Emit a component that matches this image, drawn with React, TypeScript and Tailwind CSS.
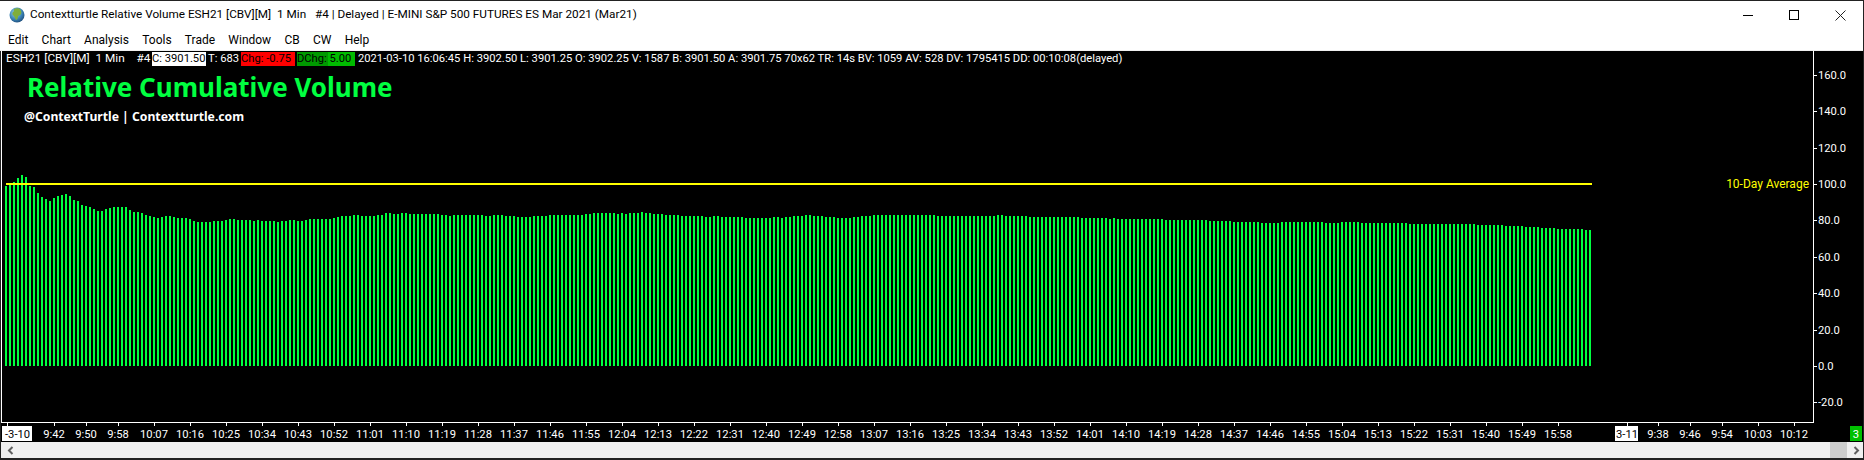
import React from "react";

const FONT = "font-['Roboto','Noto_Sans',sans-serif]";

// bar tops, read at 3x off the chart. head = offset from y 160, the rest = offset from y 205
const head = [78,68,65,54,45,51,78,81,99,111,117,123,114,108,105,102,108,120,123,135,138,141,147,153,153,147,144,141,141,141,141,150,156,156,159,165,168,171,174,171,168,168,171,174,174,174,177,183,186,186,186,186,183,183,183,180,177,177,180];
const middle = [45,45,45,48,45,48,48,48,48,51,48,48,45,45,48,48,45,42,42,42,42,42,42,39,36,33,33,33,30,30,33,33,33,33,30,30,24,24,27,27,24,24,27,27,27,27,27,27,27,27,30,30,33,30,30,30,30,30,30,30,30,33,33,30,30,30,33,33,33,36,36,36,36,33,33,33,33,30,30,30,30,30,30,30,30,30,27,27,24,24,24,24,24,24,27,24,27,24,24,24,21,24,24,27,27,27,30,30,30,30,33,33,
  33,33,33,33,36,36,33,33,36,36,36,36,36,36,39,39,39,39,39,39,39,36,36,39,36,36,33,33,33,30,30,33,33,33,36,36,36,39,39,39,39,36,36,33,33,33,30,30,30,30,30,30,30,30,30,30,30,30,30,30,30,30,33,33,33,33,33,33,33,33,33,33,33,33,33,33,33,30,30,33,33,33,33,33,33,36,36,36,36,36,36,36,36,36,36,36,36,36,39,39,39,39,39,39,39,42,39,42,42,42,42,42,42];
const tail: [number, number][] = [[42,6],[45,11],[48,6],[51,7],[54,5],[51,11],[54,4],[51,5],[54,12],[57,17],[60,7],[63,5],[66,4],[69,4],[72,7],[75,2]];

const tops = [
  ...head.map((z) => 160 + z / 3),
  ...middle.map((z) => 205 + z / 3),
  ...tail.flatMap(([z, n]) => Array<number>(n).fill(205 + z / 3)),
].slice(0, 397);

const yLabels = [160, 140, 120, 100, 80, 60, 40, 20, 0, -20];

// 10:07 to 15:58 every 9 minutes, 36px apart
const dayOne = Array.from({ length: 40 }, (_, i) => {
  const mins = 607 + i * 9;
  return { x: 154 + i * 36, label: `${Math.floor(mins / 60)}:${String(mins % 60).padStart(2, "0")}` };
});

const xLabels = [
  { x: 54, label: "9:42" },
  { x: 86, label: "9:50" },
  { x: 118, label: "9:58" },
  ...dayOne,
  { x: 1658, label: "9:38" },
  { x: 1690, label: "9:46" },
  { x: 1722, label: "9:54" },
  { x: 1758, label: "10:03" },
  { x: 1794, label: "10:12" },
];

const menuItems = ["Edit", "Chart", "Analysis", "Tools", "Trade", "Window", "CB", "CW", "Help"];

function Globe() {
  return (
    <svg width="16" height="16" viewBox="0 0 16 16" className="shrink-0">
      <defs>
        <radialGradient id="globe" cx="40%" cy="35%" r="70%">
          <stop offset="0%" stopColor="#9fd6f0" />
          <stop offset="60%" stopColor="#3c86b8" />
          <stop offset="100%" stopColor="#1d4a78" />
        </radialGradient>
      </defs>
      <circle cx="8" cy="8" r="7.5" fill="url(#globe)" />
      <path d="M5 2c2-1 5-1 6 0 1 2 2 3 1 5-1 2-3 1-3 3 0 1-1 3-2 3-1-1-1-3-2-4-2-1-2-3-1-4 1 0 1-2 1-3z" fill="#7fae3c" />
    </svg>
  );
}

function TitleBar() {
  return (
    <div className="flex h-[28px] items-center bg-white">
      <div className="ml-[9px] mr-[5px] flex">
        <Globe />
      </div>
      <span className="flex-1 whitespace-pre text-[11.75px] text-black">
        Contextturtle Relative Volume ESH21 [CBV][M]  1 Min   #4 | Delayed | E-MINI S&amp;P 500 FUTURES ES Mar 2021 (Mar21)
      </span>
      <div className="flex">
        <div className="flex w-[46px] justify-center">
          <svg width="10" height="10" viewBox="0 0 10 10"><path d="M0 5.5h10" stroke="#000" /></svg>
        </div>
        <div className="flex w-[46px] justify-center">
          <svg width="10" height="10" viewBox="0 0 10 10"><rect x="0.5" y="0.5" width="9" height="9" fill="none" stroke="#000" /></svg>
        </div>
        <div className="flex w-[46px] justify-center">
          <svg width="11" height="11" viewBox="0 0 11 11"><path d="M.5.5l10 10M10.5.5l-10 10" stroke="#222" /></svg>
        </div>
      </div>
    </div>
  );
}

function MenuBar() {
  return (
    <div className="flex h-[22px] items-center gap-[13.25px] border-b border-[#f0f0f0] bg-white pl-[8px] text-[12px] text-black">
      {menuItems.map((item) => (
        <span key={item}>{item}</span>
      ))}
    </div>
  );
}

function InfoRow() {
  return (
    <div className="absolute left-0 right-[52px] top-0 flex h-[15px] items-center whitespace-pre pl-[5px] text-[11.2px] leading-none text-white">
      <span className="w-[146px] text-[11.8px]">ESH21 [CBV][M]  1 Min    #4</span>
      <span className="flex h-[14px] w-[54px] items-center overflow-hidden bg-white text-black">C: 3901.50</span>
      <span className="ml-[2px] w-[33px]">T: 683</span>
      <span className="flex h-[14px] w-[54px] items-center overflow-hidden bg-[#ff0000] text-black">Chg: -0.75</span>
      <span className="ml-[2px] flex h-[14px] w-[58px] items-center overflow-hidden bg-[linear-gradient(90deg,#009900_53%,#00bb00_53%)] text-black">DChg: 5.00</span>
      <span className="ml-[3px]">
        2021-03-10 16:06:45 H: 3902.50 L: 3901.25 O: 3902.25 V: 1587 B: 3901.50 A: 3901.75 70x62 TR: 14s BV: 1059 AV: 528 DV: 1795415 DD: 00:10:08(delayed)
      </span>
    </div>
  );
}

function Plot() {
  return (
    <svg width="1862" height="391" viewBox="1 51 1862 391" className="block" shapeRendering="crispEdges">
      {tops.map((top, i) => (
        <rect key={i} x={5 + i * 4} y={top} width="2" height={366 - top} fill="#00ff40" />
      ))}
      <rect x="6" y="183" width="1586" height="2" fill="#ffff00" />

      {/* axes */}
      <rect x="1" y="51" width="1" height="371" fill="#fff" />
      <rect x="1" y="422" width="1813" height="1" fill="#fff" />
      <rect x="1813" y="51" width="1" height="372" fill="#fff" />

      {yLabels.map((v) => {
        const y = Math.round(366 - v * 1.82);
        return (
          <g key={v}>
            <rect x="1814" y={y} width="3" height="1" fill="#fff" />
            <text x="1818" y={y + 4} className="fill-white text-[11.2px]">{v.toFixed(1)}</text>
          </g>
        );
      })}

      <text x="1809" y="188" textAnchor="end" className="fill-[#ffff00] text-[12px]">10-Day Average</text>

      {xLabels.map((t) => (
        <g key={t.x}>
          <rect x={t.x} y="423" width="1" height="3" fill="#fff" />
          <text x={t.x} y="438" textAnchor="middle" className="fill-white text-[11.2px]">{t.label}</text>
        </g>
      ))}

      <rect x="7" y="423" width="1" height="3" fill="#fff" />
      <rect x="2" y="426" width="30" height="15" fill="#fff" />
      <text x="5" y="438" className="fill-black text-[11.2px]">-3-10</text>

      <rect x="1627" y="423" width="1" height="3" fill="#fff" />
      <rect x="1615" y="426" width="23" height="15" fill="#fff" />
      <text x="1627" y="438" textAnchor="middle" className="fill-black text-[11.2px]">3-11</text>

      <rect x="1850" y="426" width="12" height="15" fill="#00c000" />
      <text x="1856" y="438" textAnchor="middle" className="fill-white text-[11.2px]">3</text>
    </svg>
  );
}

function Chart() {
  return (
    <div className="relative h-[391px] overflow-hidden bg-black">
      <Plot />
      <InfoRow />
      <div className="absolute left-[26px] top-[20px] font-['Noto_Sans',sans-serif] text-[26px] font-bold leading-[32px] text-[#00ff40]">
        Relative Cumulative Volume
      </div>
      <div className="absolute left-[23px] top-[58px] font-['Noto_Sans',sans-serif] text-[12.2px] font-bold leading-[16px] text-white">
        @ContextTurtle | Contextturtle.com
      </div>
    </div>
  );
}

function ScrollBar() {
  return (
    <div className="flex h-[16px] items-center bg-[#f0f0f0]">
      <svg width="7" height="9" viewBox="0 0 7 9" className="ml-[6px]"><path d="M5.5 1L2 4.5 5.5 8" fill="none" stroke="#606060" strokeWidth="2" /></svg>
      <div className="flex-1" />
      <div className="h-full w-[17px] bg-[#cdcdcd]" />
      <svg width="7" height="9" viewBox="0 0 7 9" className="ml-[6px] mr-[3px]"><path d="M1.5 1L5 4.5 1.5 8" fill="none" stroke="#606060" strokeWidth="2" /></svg>
    </div>
  );
}

export default function App() {
  return (
    <div className={`h-[460px] w-[1864px] overflow-hidden bg-[#222] ${FONT}`}>
      <div className="h-px bg-[#222]" />
      <div className="mr-px">
        <TitleBar />
        <MenuBar />
      </div>
      <div className="mx-px">
        <Chart />
        <ScrollBar />
      </div>
    </div>
  );
}
